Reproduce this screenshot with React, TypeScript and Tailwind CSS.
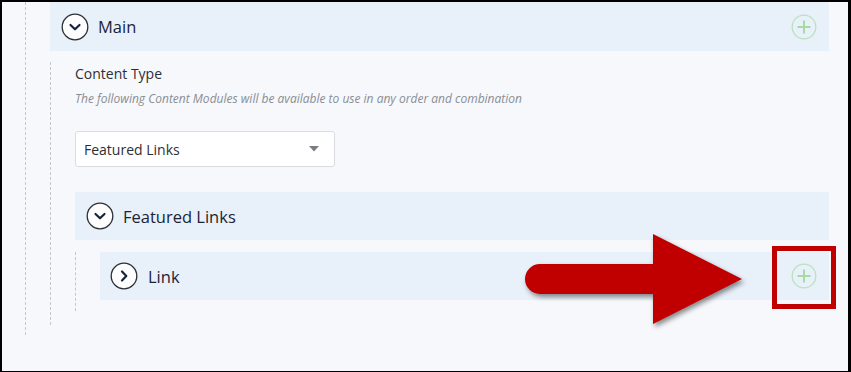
import React from "react";

function ChevronCircle({ dir }: { dir: "down" | "right" }) {
  return (
    <svg width="28" height="28" viewBox="0 0 28 28" className="shrink-0">
      <circle cx="14" cy="14" r="12.8" fill="#fdfdfe" stroke="#2b2f36" strokeWidth="1.3" />
      {dir === "down" ? (
        <path d="M9.5 12 L14 16.3 L18.5 12" fill="none" stroke="#16233d" strokeWidth="2.2" strokeLinecap="round" strokeLinejoin="round" />
      ) : (
        <path d="M12 9.5 L16.3 14 L12 18.5" fill="none" stroke="#16233d" strokeWidth="2.2" strokeLinecap="round" strokeLinejoin="round" />
      )}
    </svg>
  );
}

function PlusCircle() {
  return (
    <svg width="26" height="26" viewBox="0 0 26 26" className="shrink-0">
      <circle cx="13" cy="13" r="11.8" fill="none" stroke="#b9e3b9" strokeWidth="1.3" />
      <path d="M13 6.5 V19.5 M6.5 13 H19.5" stroke="#a6dba6" strokeWidth="2" />
    </svg>
  );
}

export default function App() {
  return (
    <div
      className="relative w-[851px] h-[372px] overflow-hidden bg-[#f6f8fb] border-l-2 border-t-2 border-r-[3px] border-b border-black"
      style={{ fontFamily: '"Open Sans", "Noto Sans", sans-serif' }}
    >
      <div className="ml-[23px] w-[803px] h-[333px] border-l border-dashed border-[#c4c7cc] pl-[24px]">
        {/* Main header */}
        <div className="w-[779px] h-[49px] bg-[#e8f0fa] flex items-center pl-[11px] pr-[12px]">
          <ChevronCircle dir="down" />
          <span className="ml-[9px] text-[16.5px] text-[#1b2436] leading-none pt-[2px]">Main</span>
          <div className="ml-auto">
            <PlusCircle />
          </div>
        </div>

        {/* Body */}
        <div className="mt-[11px] h-[263px] border-l border-dashed border-[#c4c7cc] pl-[24px] pt-[2px]">
          <div className="text-[14px] leading-[19px] text-[#2d2f33]">Content Type</div>
          <div className="mt-[8px] text-[12px] leading-[16px] italic text-[#8a8d93]">
            The following Content Modules will be available to use in any order and combination
          </div>
          <div className="mt-[24px] w-[260px] h-[36px] bg-white border border-[#d9dce1] rounded-[3px] flex items-center pl-[8px] pr-[15px]">
            <span className="text-[14px] text-[#2d2f33]">Featured Links</span>
            <svg width="10" height="6" viewBox="0 0 10 6" className="ml-auto">
              <path d="M0 0 H10 L5 5.5 Z" fill="#7a7d82" />
            </svg>
          </div>

          {/* Featured Links header */}
          <div className="mt-[25px] w-[754px] h-[48px] bg-[#e8f0fa] flex items-center pl-[11px]">
            <ChevronCircle dir="down" />
            <span className="ml-[9px] text-[16.5px] text-[#1b2436] leading-none pt-[2px]">Featured Links</span>
          </div>

          {/* Link section */}
          <div className="mt-[12px] h-[59px] border-l border-dashed border-[#c4c7cc] pl-[24px]">
            <div className="w-[729px] h-[48px] bg-[#e8f0fa] flex items-center pl-[10px] pr-[12px]">
              <ChevronCircle dir="right" />
              <span className="ml-[10px] text-[16.5px] text-[#1b2436] leading-none pt-[2px]">Link</span>
              <div className="ml-auto">
                <PlusCircle />
              </div>
            </div>
          </div>
        </div>
      </div>

      {/* Red arrow overlay */}
      <svg
        className="absolute left-[510px] top-[228px]"
        width="250"
        height="110"
        viewBox="0 0 250 110"
        style={{ filter: "drop-shadow(2px 3px 2.5px rgba(0,0,0,0.45))" }}
      >
        <path
          d="M28 34 H141 V4 L230 49 L141 94 V64 H28 A15 15 0 0 1 28 34 Z"
          fill="#c00000"
        />
      </svg>

      {/* Red highlight box */}
      <div className="absolute left-[770px] top-[244px] w-[64px] h-[63px] border-[5.5px] border-[#c00000]" />
    </div>
  );
}
